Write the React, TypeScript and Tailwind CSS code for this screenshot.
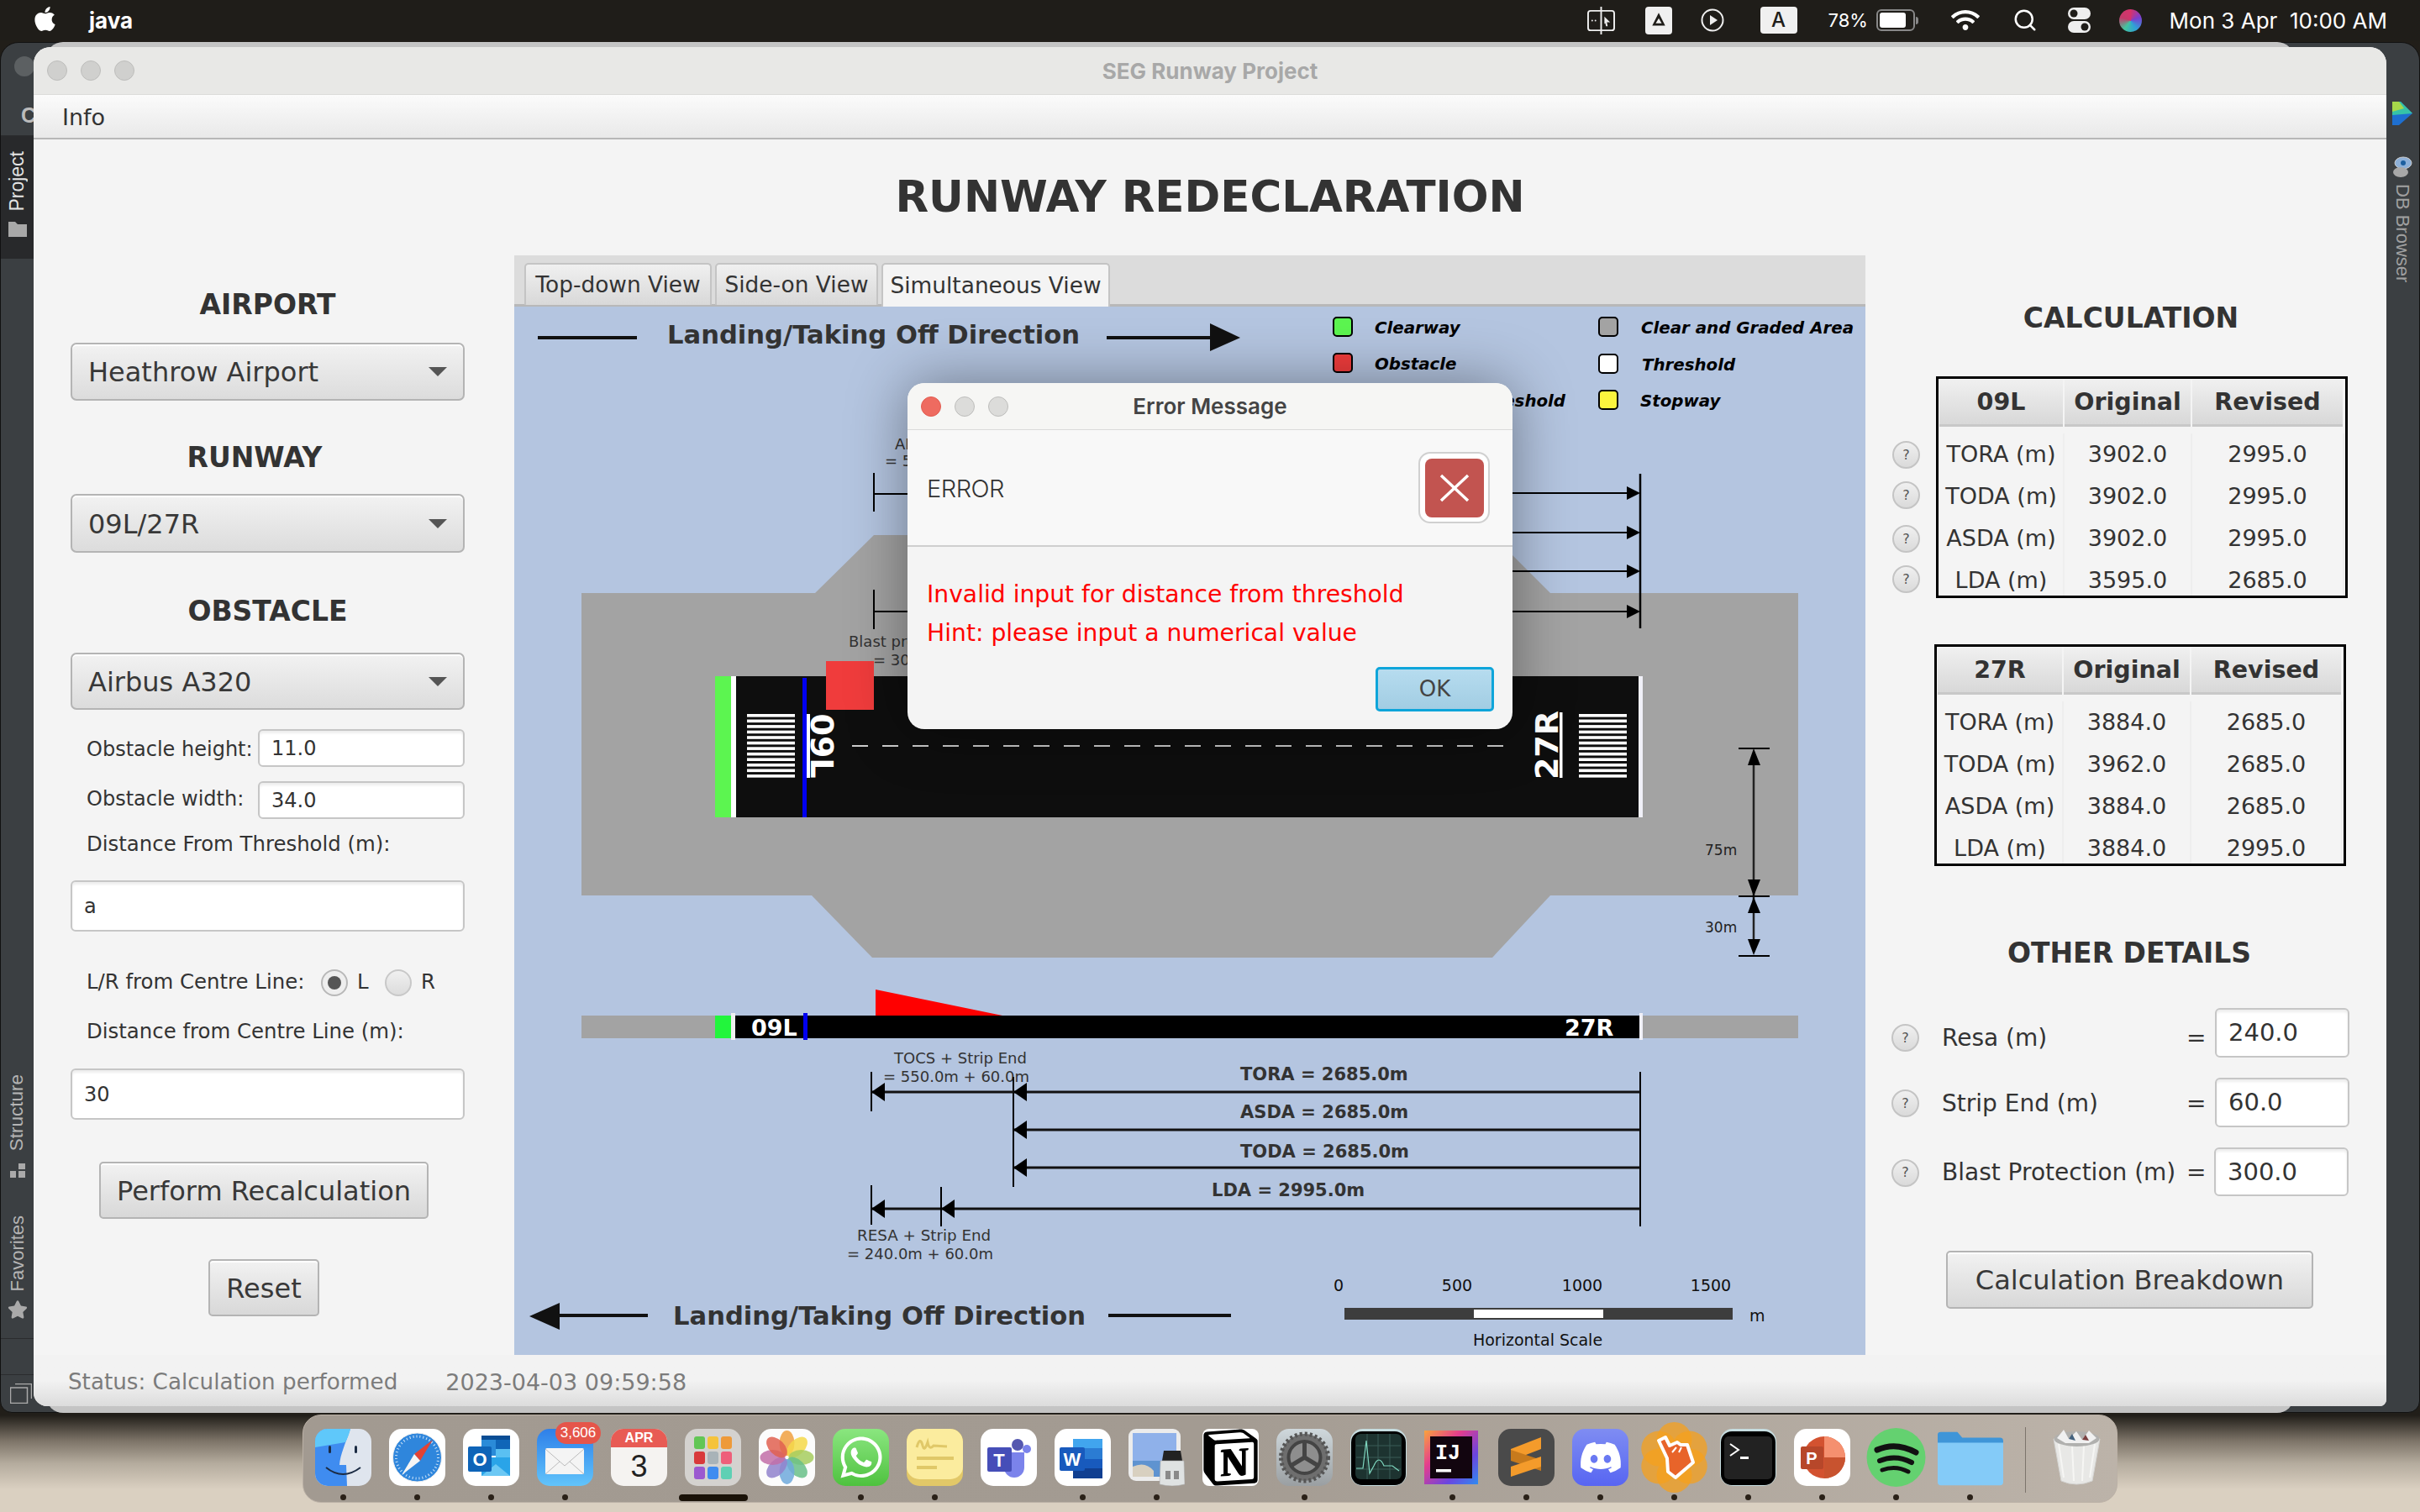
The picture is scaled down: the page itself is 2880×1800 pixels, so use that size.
import React from 'react';
import { FaApple, FaWhatsapp, FaDiscord, FaWifi, FaStar } from 'react-icons/fa';
import { SiNotion } from 'react-icons/si';
import { Search } from 'lucide-react';

const Light = ({ c }: { c: string }) => (
  <span className={`block w-[24px] h-[24px] rounded-full border border-[#bdbdbb] ${c}`} />
);

function Combo({ label }: { label: string }) {
  return (
    <div className="h-full flex items-center justify-between pl-[19px] pr-[19px] border-2 border-[#b4b4b4] rounded-[7px] bg-gradient-to-b from-[#f2f2f2] to-[#dcdcdc] shadow-[inset_0_2px_0_#fff] text-[32px] text-[#383838]">
      <span className="pt-[1px]">{label}</span>
      <span className="w-0 h-0 border-l-[11px] border-r-[11px] border-t-[11px] border-l-transparent border-r-transparent border-t-[#555]" />
    </div>
  );
}

function Input({ value, size = 'text-[24px]', cls = '' }: { value: string; size?: string; cls?: string }) {
  return (
    <div className={`flex items-center pl-[14px] pt-[1px] border-2 border-[#c6c6c6] rounded-[6px] bg-white shadow-[inset_0_3px_3px_#eee] text-[#333] ${size} ${cls}`}>
      {value}
    </div>
  );
}

function Btn({ label, cls }: { label: string; cls: string }) {
  return (
    <div className={`flex items-center justify-center pt-[1px] border-2 border-[#b4b4b4] rounded-[5px] bg-gradient-to-b from-[#f2f2f2] to-[#d8d8d8] shadow-[inset_0_2px_0_#fff] text-[#383838] text-[32px] ${cls}`}>
      {label}
    </div>
  );
}

function Help({ cls = '' }: { cls?: string }) {
  return (
    <div className={`shrink-0 w-[33px] h-[33px] rounded-full border-2 border-[#c4c4c4] bg-gradient-to-b from-[#f0f0f0] to-[#dadada] flex items-center justify-center text-[16px] text-[#555] ${cls}`}>
      ?
    </div>
  );
}

function DataTable({ head, rows, cols, cls }: { head: string; rows: string[][]; cols: string; cls: string }) {
  return (
    <div className={`w-[490px] h-[264px] border-[3px] border-black overflow-hidden ${cls}`}>
      <div className={`grid ${cols} h-[56px] mt-[1px] pl-[1px]`}>
        {[head, 'Original', 'Revised'].map((h) => (
          <div key={h} className="flex items-center justify-center pt-[2px] mr-[2px] bg-gradient-to-b from-[#f0f0f0] to-[#d8d8d8] border-b-[3px] border-[#c8c8c8] text-[28.5px] font-bold text-[#333]">
            {h}
          </div>
        ))}
      </div>
      <div className="pt-[8px]">
        {rows.map((r) => (
          <div key={r[0]} className={`grid ${cols} h-[50px] pl-[1px]`}>
            {r.map((c, i) => (
              <div key={i} className="flex items-center justify-center text-[27px] text-[#333] border-r-2 border-[#eeeeee] whitespace-nowrap">
                {c}
              </div>
            ))}
          </div>
        ))}
      </div>
    </div>
  );
}

function DetailRow({ label, value, cls, shift, inputCls = 'ml-[13px]' }: { label: string; value: string; cls: string; shift: string; inputCls?: string }) {
  return (
    <div className={`flex items-center pl-[31px] ${cls}`}>
      <div className={`flex items-center ${shift}`}>
        <Help />
        <span className="ml-[27px] w-[291px] text-[28px] text-[#333]">{label}</span>
        <span className="w-[21px] text-[28px] text-[#333]">=</span>
      </div>
      <Input value={value} size="text-[29px]" cls={`w-[160px] h-full ${inputCls}`} />
    </div>
  );
}

const T = ({ x, y, s, w, a, f = '#333', st, children }: { x: number; y: number; s: number; w?: number; a?: 'middle' | 'start' | 'end'; f?: string; st?: 'italic'; children: React.ReactNode }) => (
  <text x={x} y={y} fontSize={s} fontWeight={w || 400} textAnchor={a || 'start'} fill={f} fontStyle={st}>{children}</text>
);

const LeftHead = ({ x, y }: { x: number; y: number }) => <polygon points={`${x},${y} ${x + 16},${y - 11} ${x + 16},${y + 11}`} fill="#000" />;
const RightHead = ({ x, y }: { x: number; y: number }) => <polygon points={`${x},${y} ${x - 16},${y - 8} ${x - 16},${y + 8}`} fill="#000" />;

function Stripes({ x }: { x: number }) {
  const ys = Array.from({ length: 12 }, (_, i) => 850 + i * 6.55);
  return <>{ys.map((y) => <rect key={y} x={x} y={y} width="57" height="3.6" fill="#fff" />)}</>;
}

const legend: [number, number, string, string, number, 'start' | 'end'][] = [
  [1587, 378, '#5cf550', 'Clearway', 1636, 'start'],
  [1587, 421, '#f03c3c', 'Obstacle', 1636, 'start'],
  [1587, 465, '#2020f0', 'Displaced Threshold', 1863, 'end'],
  [1903, 378, '#a3a3a3', 'Clear and Graded Area', 1953, 'start'],
  [1903, 422, '#ffffff', 'Threshold', 1954, 'start'],
  [1903, 465, '#fbf43e', 'Stopway', 1952, 'start'],
];

function Diagram() {
  const dashes = Array.from({ length: 22 }, (_, i) => 1014 + i * 36);
  return (
    <svg viewBox="612 365 1608 1248" className="block w-[1608px] h-[1248px] bg-[#b4c5e0]">
      <line x1="640" x2="758" y1="402" y2="402" stroke="#111" strokeWidth="4" />
      <T x={794} y={409} s={30.6} w={700}>Landing/Taking Off Direction</T>
      <line x1="1317" x2="1442" y1="402" y2="402" stroke="#111" strokeWidth="4" />
      <polygon points="1440,385 1476,402 1440,418" fill="#111" />

      {legend.map(([x, y, c, t, tx, a]) => (
        <g key={t}>
          <rect x={x} y={y} width="22" height="22" rx="4" fill={c} stroke="#000" strokeWidth="2" />
          <T x={tx} y={y + 19} s={19.8} w={700} st="italic" f="#000" a={a}>{t}</T>
        </g>
      ))}

      <polygon points="692,706 970,706 1040,637 1776,637 1845,706 2140,706 2140,1066 1845,1066 1776,1140 1038,1140 966,1066 692,1066" fill="#a3a3a3" />

      <line x1="1040" x2="1040" y1="563" y2="609" stroke="#000" strokeWidth="2" />
      <line x1="1040" x2="1100" y1="588" y2="588" stroke="#000" strokeWidth="2" />
      <line x1="1040" x2="1040" y1="702" y2="749" stroke="#000" strokeWidth="2" />
      <line x1="1040" x2="1100" y1="728" y2="728" stroke="#000" strokeWidth="2" />
      <T x={1065} y={535} s={18}>ALS + Strip End</T>
      <T x={1053} y={555} s={18}>= 550.0m + 60.0m</T>
      <T x={1010} y={770} s={18}>Blast protection</T>
      <T x={1039} y={792} s={18}>= 300.0m</T>
      <line x1="1952" x2="1952" y1="564" y2="748" stroke="#000" strokeWidth="2.5" />
      {[587, 634, 680, 728].map((y) => (
        <g key={y}>
          <line x1="1700" x2="1940" y1={y} y2={y} stroke="#000" strokeWidth="2" />
          <RightHead x={1952} y={y} />
        </g>
      ))}

      <rect x="851" y="805" width="19" height="168" fill="#5cf550" />
      <rect x="875" y="805" width="1075" height="168" fill="#0e0e0e" />
      <rect x="870" y="805" width="6" height="168" fill="#fff" />
      <rect x="1950" y="805" width="5" height="168" fill="#f0f0f8" />
      <rect x="955" y="807" width="5" height="166" fill="#0000f0" />
      <Stripes x={889} />
      <Stripes x={1879} />
      <rect x="960" y="850" width="4" height="76" fill="#fff" />
      <text x="965" y="888" fontSize="38" fontWeight="700" fill="#fff" textAnchor="middle" transform="rotate(90 965 888)">09L</text>
      <rect x="1856" y="848" width="3.5" height="78" fill="#fff" />
      <text x="1854" y="887" fontSize="38" fontWeight="700" fill="#fff" textAnchor="middle" transform="rotate(-90 1854 887)">27R</text>
      {dashes.map((x) => <rect key={x} x={x} y="887" width="19" height="2" fill="#ccc" />)}
      <rect x="983" y="787" width="57" height="58" fill="#f03c3c" />

      <line x1="2087" x2="2087" y1="900" y2="1130" stroke="#222" strokeWidth="2.5" />
      {[891, 1067, 1138].map((y) => <line key={y} x1="2069" x2="2106" y1={y} y2={y} stroke="#000" strokeWidth="2" />)}
      <polygon points="2087,891 2095,911 2080,911" fill="#000" />
      <polygon points="2087,1067 2095,1047 2080,1047" fill="#000" />
      <polygon points="2087,1068 2095,1087 2080,1087" fill="#000" />
      <polygon points="2087,1137 2095,1118 2080,1118" fill="#000" />
      <T x={2029} y={1018} s={17} f="#222">75m</T>
      <T x={2029} y={1110} s={17} f="#222">30m</T>

      <rect x="692" y="1209" width="1448" height="27" fill="#a3a3a3" />
      <rect x="851" y="1209" width="19" height="27" fill="#22f53c" />
      <rect x="875" y="1209" width="1076" height="27" fill="#000" />
      <rect x="870" y="1206" width="5" height="32" fill="#f0f0f0" />
      <rect x="1951" y="1206" width="4" height="32" fill="#f0f0f8" />
      <rect x="956" y="1206" width="5" height="32" fill="#0000f0" />
      <T x={894} y={1233} s={27} w={700} f="#fff">09L</T>
      <T x={1862} y={1233} s={27} w={700} f="#fff">27R</T>
      <polygon points="1042,1178 1193,1209 1042,1209" fill="#f00" />

      <T x={1143} y={1266} s={18} a="middle">TOCS + Strip End</T>
      <T x={1051} y={1288} s={18}>= 550.0m + 60.0m</T>
      <line x1="1037" x2="1037" y1="1276" y2="1323" stroke="#000" strokeWidth="2" />
      <line x1="1206" x2="1206" y1="1282" y2="1413" stroke="#000" strokeWidth="2" />
      <line x1="1952" x2="1952" y1="1276" y2="1460" stroke="#000" strokeWidth="2" />
      <line x1="1037" x2="1952" y1="1300" y2="1300" stroke="#111" strokeWidth="3" />
      <line x1="1206" x2="1952" y1="1345" y2="1345" stroke="#111" strokeWidth="3" />
      <line x1="1206" x2="1952" y1="1390" y2="1390" stroke="#111" strokeWidth="3" />
      <line x1="1037" x2="1952" y1="1439" y2="1439" stroke="#111" strokeWidth="3" />
      <LeftHead x={1037} y={1300} />
      <LeftHead x={1206} y={1300} />
      <LeftHead x={1206} y={1345} />
      <LeftHead x={1206} y={1390} />
      <LeftHead x={1037} y={1439} />
      <LeftHead x={1120} y={1439} />
      <line x1="1037" x2="1037" y1="1411" y2="1458" stroke="#000" strokeWidth="2" />
      <line x1="1120" x2="1120" y1="1413" y2="1460" stroke="#000" strokeWidth="2" />
      <T x={1476} y={1286} s={21} w={700}>TORA = 2685.0m</T>
      <T x={1476} y={1331} s={21} w={700}>ASDA = 2685.0m</T>
      <T x={1476} y={1378} s={21} w={700}>TODA = 2685.0m</T>
      <T x={1442} y={1424} s={21} w={700}>LDA = 2995.0m</T>
      <T x={1020} y={1477} s={18.3}>RESA + Strip End</T>
      <T x={1008} y={1499} s={18}>= 240.0m + 60.0m</T>

      <polygon points="630,1567 666,1551 666,1583" fill="#111" />
      <line x1="660" x2="771" y1="1566" y2="1566" stroke="#111" strokeWidth="4" />
      <T x={801} y={1577} s={30.6} w={700}>Landing/Taking Off Direction</T>
      <line x1="1319" x2="1465" y1="1566" y2="1566" stroke="#111" strokeWidth="4" />

      <T x={1593} y={1537} s={19} a="middle" f="#111">0</T>
      <T x={1734} y={1537} s={19} a="middle" f="#111">500</T>
      <T x={1883} y={1537} s={19} a="middle" f="#111">1000</T>
      <T x={2036} y={1537} s={19} a="middle" f="#111">1500</T>
      <rect x="1600" y="1557" width="462" height="14" fill="#3d3d3d" />
      <rect x="1754" y="1559" width="154" height="10" fill="#fff" />
      <T x={2082} y={1573} s={19} f="#111">m</T>
      <T x={1830} y={1602} s={19} a="middle" f="#111">Horizontal Scale</T>
    </svg>
  );
}

const MenuBar = () => (
  <div className="relative h-[48px] bg-[#1f1d19] flex items-center text-white font-['Inter',sans-serif]">
    <FaApple className="ml-[37px] w-[33px] h-[33px] -mt-[3px]" />
    <span className="ml-[36px] text-[26px] font-bold">java</span>
    <div className="ml-auto flex items-center">
      <svg viewBox="0 0 34 34" className="w-[33px] h-[33px]">
        <rect x="1" y="5" width="32" height="24" rx="3" fill="none" stroke="#eee" strokeWidth="2" />
        <line x1="17" x2="17" y1="0" y2="34" stroke="#eee" strokeWidth="2" />
        <polygon points="21,12 28,19 24,19 25,24 23,24 22,20 21,21" fill="#eee" />
        <circle cx="6" cy="17" r="1" fill="#eee" /><circle cx="10" cy="17" r="1" fill="#eee" />
      </svg>
      <div className="ml-[36px] w-[32px] h-[33px] rounded-[4px] bg-[#f0f0f0] flex items-center justify-center">
        <svg viewBox="0 0 20 20" className="w-[22px] h-[22px]"><path d="M10 2 L17 16 H3 Z M10 8 L6.8 13.5 H13.2 Z" fill="#1f1d19" fillRule="evenodd" /></svg>
      </div>
      <svg viewBox="0 0 28 28" className="ml-[34px] w-[28px] h-[28px]">
        <circle cx="14" cy="14" r="12.5" fill="none" stroke="#eee" strokeWidth="2" />
        <polygon points="11,8 20,14 11,20" fill="#eee" />
      </svg>
      <div className="ml-[43px] w-[44px] h-[32px] rounded-[4px] bg-[#f0f0f0] text-[#1f1d19] text-[24px] font-medium flex items-center justify-center">A</div>
      <span className="ml-[37px] text-[22px] w-[46px]">78%</span>
      <div className="ml-[11px] flex items-center">
        <div className="w-[46px] h-[26px] rounded-[6px] border-2 border-[#888] p-[2px]">
          <div className="w-[31px] h-full rounded-[3px] bg-white" />
        </div>
        <div className="w-[3px] h-[9px] bg-[#888] rounded-r ml-[1px]" />
      </div>
      <FaWifi className="ml-[39px] w-[34px] h-[28px]" />
      <Search className="ml-[39px] w-[30px] h-[30px]" strokeWidth={2} />
      <svg viewBox="0 0 29 32" className="ml-[35px] w-[29px] h-[32px]">
        <rect x="1" y="1" width="27" height="14" rx="7" fill="#eee" />
        <rect x="1" y="17" width="27" height="14" rx="7" fill="#eee" />
        <circle cx="8" cy="8" r="4.5" fill="#1f1d19" /><circle cx="21" cy="24" r="4.5" fill="#1f1d19" />
      </svg>
      <div className="ml-[33px] w-[27px] h-[27px] rounded-full bg-[conic-gradient(#d6336c,#7a3fd0,#2f9fd8,#43c59e,#c43a6a,#d6336c)]" />
      <span className="ml-[33px] mr-[39px] text-[26px] whitespace-nowrap">Mon 3 Apr&nbsp;&nbsp;10:00 AM</span>
    </div>
  </div>
);

const Ide = () => (
  <div className="absolute left-0 top-[50px] w-[2880px] h-[1632px] rounded-t-[22px] rounded-b-[14px] bg-[#3b3f42] border border-[#111] overflow-hidden flex justify-between font-['Liberation_Sans',sans-serif]">
    <div className="w-[39px] flex flex-col">
      <div className="relative h-[111px] border-b border-[#2a2c2e] overflow-hidden">
        <span className="absolute left-[16px] top-[16px] w-[24px] h-[24px] rounded-full bg-[#5c6062]" />
        <span className="absolute left-[24px] top-[68px] w-[15px] overflow-hidden text-[25px] font-bold text-[#bbb]">C</span>
      </div>
      <div className="h-[146px] bg-[#28292b] flex flex-col items-center pt-[18px] text-[#e4e4e4]">
        <span className="text-[23px] [writing-mode:vertical-rl] rotate-180 leading-none">Project</span>
        <svg viewBox="0 0 22 18" className="mt-[12px] w-[22px] h-[18px]"><path d="M0 0 H8 L11 3 H22 V18 H0 Z" fill="#a8a8a8" /></svg>
      </div>
      <div className="mt-[971px] flex flex-col items-center text-[#b4b4b4]">
        <span className="text-[22.5px] [writing-mode:vertical-rl] rotate-180 leading-none">Structure</span>
        <svg viewBox="0 0 18 17" className="mt-[15px] w-[18px] h-[17px]"><path d="M0 9 H7 V17 H0 Z M10 0 H18 V7 H10 Z M10 9 H18 V17 H10 Z" fill="#aaa" /></svg>
        <span className="mt-[45px] text-[22px] [writing-mode:vertical-rl] rotate-180 leading-none">Favorites</span>
        <FaStar className="mt-[9px] w-[24px] h-[24px] text-[#aaa]" />
      </div>
      <div className="mt-[22px] h-px bg-[#2a2c2e]" />
      <div className="mt-[42px] h-px bg-[#2a2c2e]" />
      <svg viewBox="0 0 26 24" className="ml-[11px] mt-[10px] w-[26px] h-[24px]">
        <path d="M6 0.5 H25.5 V18 M0.5 5 H20.5 V23.5 H0.5 Z" fill="none" stroke="#aaa" strokeWidth="1.5" />
      </svg>
    </div>
    <div className="w-[40px] flex flex-col items-center pt-[70px] relative text-[#a0a0a0]">
      <svg viewBox="0 0 24 28" className="w-[24px] h-[28px]">
        <path d="M0 0 L10 0 L24 14 L8 28 L0 28 Z" fill="#1e6fd0" />
        <path d="M0 0 L10 0 L24 14 L0 16 Z" fill="#36c3a8" />
        <path d="M0 0 L8 0 L14 8 L0 12 Z" fill="#a6d84a" />
      </svg>
      <svg viewBox="0 0 24 26" className="mt-[37px] w-[24px] h-[26px]">
        <ellipse cx="13" cy="8" rx="10" ry="7" fill="#8db0d8" stroke="#ccc" /><circle cx="13" cy="8" r="3" fill="#1c5f9f" />
        <ellipse cx="10" cy="19" rx="9" ry="6" fill="#a8a8a8" />
      </svg>
      <span className="mt-[7px] text-[22px] [writing-mode:vertical-rl] leading-none whitespace-nowrap">DB Browser</span>
    </div>
  </div>
);

const App1 = () => (
  <div className="absolute left-[40px] top-[56px] w-[2800px] h-[1618px] rounded-t-[20px] rounded-bl-[16px] rounded-br-[8px] overflow-hidden bg-[#f4f4f4] flex flex-col font-['DejaVu_Sans',sans-serif] text-[#333]">
    <div className="relative h-[57px] bg-[#e8e8e6] border-b border-[#dcdcda] flex items-center pl-[16px] gap-[16px]">
      <Light c="bg-[#d0d0ce]" />
      <Light c="bg-[#d0d0ce]" />
      <Light c="bg-[#d0d0ce]" />
      <span className="absolute left-0 right-0 text-center text-[26px] font-['Inter',sans-serif] font-bold text-[#a8a8a8]">SEG Runway Project</span>
    </div>
    <div className="h-[53px] bg-gradient-to-b from-[#fbfbfb] to-[#e9e9e9] border-b-2 border-[#b7b7b7] flex items-center pl-[34px] pt-[4px] text-[27px] text-[#333]">
      Info
    </div>
    <div className="h-[138px] flex items-center justify-center text-[51.5px] font-bold text-[#333] pt-[0px]">RUNWAY REDECLARATION</div>
    <div className="flex h-[1309px]">
      <div className="w-[572px] pl-[44px] pr-[59px] flex flex-col">
        <div className="mt-[39px] h-[40px] flex items-center justify-center text-[33px] font-bold">AIRPORT</div>
        <div className="mt-[25px] h-[69px]"><Combo label="Heathrow Airport" /></div>
        <div className="mt-[47px] h-[40px] flex items-center justify-center pr-[31px] text-[33px] font-bold pt-[1px]">RUNWAY</div>
        <div className="mt-[24px] h-[70px]"><Combo label="09L/27R" /></div>
        <div className="mt-[49px] h-[40px] flex items-center justify-center text-[33px] font-bold pt-[1px]">OBSTACLE</div>
        <div className="mt-[30px] h-[68px]"><Combo label="Airbus A320" /></div>
        <div className="mt-[23px] h-[45px] flex items-center pl-[19px] text-[24px]">
          <span className="w-[204px] pt-[2px]">Obstacle height:</span>
          <Input value="11.0" cls="w-[246px] h-full" />
        </div>
        <div className="mt-[17px] h-[45px] flex items-center pl-[19px] text-[24px]">
          <span className="w-[204px] -mt-[4px]">Obstacle width:</span>
          <Input value="34.0" cls="w-[246px] h-full" />
        </div>
        <div className="mt-[14px] h-[30px] flex items-center pl-[19px] pt-[2px] text-[24.4px] whitespace-nowrap">Distance From Threshold (m):</div>
        <div className="mt-[29px] h-[61px]"><Input value="a" cls="h-full" /></div>
        <div className="mt-[44px] h-[33px] flex items-center pl-[19px] text-[24.4px]">
          <span className="w-[279px]">L/R from Centre Line:</span>
          <span className="w-[32px] h-[32px] rounded-full border-2 border-[#b8b8b8] bg-[#eee] flex items-center justify-center">
            <span className="w-[16px] h-[16px] rounded-full bg-[#555]" />
          </span>
          <span className="ml-[11px] w-[33px]">L</span>
          <span className="w-[32px] h-[32px] rounded-full border-2 border-[#c8c8c8] bg-gradient-to-b from-[#f0f0f0] to-[#dcdcdc]" />
          <span className="ml-[11px]">R</span>
        </div>
        <div className="mt-[26px] h-[30px] flex items-center pl-[19px] pt-[2px] text-[24.4px] whitespace-nowrap">Distance from Centre Line (m):</div>
        <div className="mt-[30px] h-[61px]"><Input value="30" cls="h-full" /></div>
        <Btn label="Perform Recalculation" cls="mt-[50px] h-[68px] ml-[34px] w-[392px]" />
        <Btn label="Reset" cls="mt-[48px] h-[68px] ml-[164px] w-[132px]" />
      </div>
      <div className="w-[1608px] flex flex-col">
        <div className="h-[61px] bg-[#dcdcdc] border-b-[3px] border-[#b8b8b8] flex pl-[12px] pt-[9px] gap-[4px] text-[26.4px] text-[#333]">
          <div className="h-[50px] w-[223px] flex items-center justify-center rounded-t-[5px] border-2 border-b-0 border-[#c4c4c4] bg-gradient-to-b from-[#f0f0f0] to-[#d8d8d8]">Top-down View</div>
          <div className="h-[50px] w-[194px] flex items-center justify-center rounded-t-[5px] border-2 border-b-0 border-[#c4c4c4] bg-gradient-to-b from-[#f0f0f0] to-[#d8d8d8]">Side-on View</div>
          <div className="h-[52px] w-[272px] flex items-center justify-center rounded-t-[5px] border-2 border-b-0 border-[#c4c4c4] bg-[#f4f4f4]">Simultaneous View</div>
        </div>
        <Diagram />
      </div>
      <div className="flex-1 flex flex-col">
        <div className="mt-[54px] h-[40px] flex items-center justify-center pl-[26px] pr-[14px] pt-[2px] text-[33px] font-bold">CALCULATION</div>
        <div className="mt-[50px] flex pl-[32px]">
          <div className="w-[33px] pt-[77px]">
            <Help />
            <Help cls="mt-[15px]" />
            <Help cls="mt-[19px]" />
            <Help cls="mt-[15px]" />
          </div>
          <DataTable
            head="09L"
            cols="grid-cols-[149px_152px_181px]"
            cls="ml-[19px]"
            rows={[
              ['TORA (m)', '3902.0', '2995.0'],
              ['TODA (m)', '3902.0', '2995.0'],
              ['ASDA (m)', '3902.0', '2995.0'],
              ['LDA (m)', '3595.0', '2685.0'],
            ]}
          />
        </div>
        <DataTable
          head="27R"
          cols="grid-cols-[150px_152px_180px]"
          cls="mt-[55px] ml-[82px]"
          rows={[
            ['TORA (m)', '3884.0', '2685.0'],
            ['TODA (m)', '3962.0', '2685.0'],
            ['ASDA (m)', '3884.0', '2685.0'],
            ['LDA (m)', '3884.0', '2995.0'],
          ]}
        />
        <div className="mt-[83px] h-[40px] flex items-center justify-center pl-[28px] pr-[20px] pt-[1px] text-[33px] font-bold">OTHER DETAILS</div>
        <DetailRow label="Resa (m)" value="240.0" cls="mt-[46px] h-[59px]" shift="pt-[12px]" />
        <DetailRow label="Strip End (m)" value="60.0" cls="mt-[24px] h-[59px]" shift="pt-[2px]" />
        <DetailRow label="Blast Protection (m)" value="300.0" cls="mt-[24px] h-[58px]" shift="pt-[2px]" inputCls="ml-[12px]" />
        <Btn label="Calculation Breakdown" cls="mt-[65px] h-[69px] ml-[96px] w-[437px]" />
      </div>
    </div>
    <div className="flex-1 flex items-center pl-[41px] pt-[5px] gap-[57px] bg-gradient-to-b from-[#f2f2f2] from-50% to-[#dcdcdc] text-[#7c7c7c]">
      <span className="text-[26.2px]">Status: Calculation performed</span>
      <span className="text-[27px]">2023-04-03 09:59:58</span>
    </div>
  </div>
);

const ErrorDialog = () => (
  <div className="absolute left-[1080px] top-[456px] w-[720px] h-[412px] rounded-[20px] overflow-hidden bg-[#f4f4f4] shadow-[0_0_70px_rgba(0,0,0,0.4)] flex flex-col font-['DejaVu_Sans',sans-serif]">
    <div className="relative h-[56px] bg-[#f6f6f4] border-b border-[#dadada] flex items-center pl-[16px] gap-[16px]">
      <Light c="bg-[#ee6b60] border-[#e25c50]" />
      <Light c="bg-[#dcdcda]" />
      <Light c="bg-[#dcdcda]" />
      <span className="absolute left-0 right-0 text-center text-[26px] font-['Inter',sans-serif] font-semibold text-[#444]">Error Message</span>
    </div>
    <div className="h-[139px] bg-[#f8f8f8] border-b-2 border-[#cfcfcf] flex items-center justify-between pl-[23px] pr-[27px]">
      <span className="text-[29px] pt-[2px] font-['Inter',sans-serif] font-light text-[#333] tracking-[-0.5px]">ERROR</span>
      <div className="w-[85px] h-[85px] rounded-[14px] border-2 border-[#d0d0d0] bg-white flex items-center justify-center">
        <div className="w-[70px] h-[70px] rounded-[8px] bg-[#c25450] flex items-center justify-center">
          <svg viewBox="0 0 36 36" className="w-[36px] h-[36px]"><path d="M2 3 L34 33 M34 3 L2 33" stroke="#fff" strokeWidth="3.5" /></svg>
        </div>
      </div>
    </div>
    <div className="flex-1 pl-[23px] pr-[22px] text-[28.2px] text-[#f00]">
      <div className="mt-[37px] h-[40px] flex items-center">Invalid input for distance from threshold</div>
      <div className="mt-[6px] h-[40px] flex items-center">Hint: please input a numerical value</div>
      <div className="mt-[20px] ml-auto w-[141px] h-[53px] rounded-[5px] border-[3px] border-[#0ea5da] bg-gradient-to-b from-[#b6dcef] to-[#a2cde3] flex items-center justify-center text-[26px] text-[#444]">OK</div>
    </div>
  </div>
);

const Tile = ({ c, children }: { c: string; children?: React.ReactNode }) => (
  <div className={`w-[67px] h-[68px] rounded-[15px] overflow-hidden flex items-center justify-center ${c}`}>{children}</div>
);

const V = 'w-[67px] h-[68px] block';

const icons: { el: React.ReactNode; dot?: boolean }[] = [
  { dot: true, el: (
    <svg viewBox="0 0 67 68" className={V}>
      <defs><clipPath id="fc"><rect width="67" height="68" rx="15" /></clipPath></defs>
      <g clipPath="url(#fc)">
        <rect width="67" height="68" fill="#dfe5ee" />
        <path d="M0 0 H42 C36 18 30 30 29 43 H37 L38 68 H0 Z" fill="#3f8cf0" />
        <path d="M0 0 H42 C40 8 38 12 36 16 L0 22Z" fill="#5fc8fa" />
      </g>
      <rect x="16" y="20" width="3" height="9" fill="#1c2c44" rx="1.5" />
      <rect x="47" y="20" width="3" height="9" fill="#1c2c44" rx="1.5" />
      <path d="M13 46 Q33 62 54 46" fill="none" stroke="#1c2c44" strokeWidth="2" />
    </svg>) },
  { dot: true, el: (
    <Tile c="bg-white">
      <svg viewBox="0 0 67 68" className={V}>
        <circle cx="33.5" cy="34" r="29" fill="#2f86dc" stroke="#eee" strokeWidth="1" />
        <circle cx="33.5" cy="34" r="25" fill="none" stroke="#cfe4f8" strokeWidth="3" strokeDasharray="1 3" />
        <polygon points="52,13 30,30 37,38" fill="#e34234" />
        <polygon points="15,55 30,30 37,38" fill="#f5f5f5" />
      </svg>
    </Tile>) },
  { dot: true, el: (
    <Tile c="bg-white">
      <svg viewBox="0 0 67 68" className={V}>
        <rect x="22" y="8" width="34" height="24" fill="#1066b8" />
        <rect x="22" y="8" width="34" height="5" fill="#0a4d94" />
        <rect x="22" y="13" width="17" height="19" fill="#2a8bd8" />
        <rect x="39" y="24" width="17" height="16" fill="#5ac0f2" />
        <polygon points="22,34 56,34 56,56 22,56" fill="#2aa4e8" />
        <polygon points="22,56 39,42 56,56" fill="#6cc8f4" />
        <rect x="6" y="21" width="28" height="30" rx="2" fill="#0e64b8" />
        <text x="20" y="44" fontSize="22" fontWeight="700" fill="#fff" textAnchor="middle" fontFamily="Liberation Sans">O</text>
      </svg>
    </Tile>) },
  { dot: true, el: (
    <Tile c="bg-gradient-to-b from-[#2f7fe8] to-[#62c4fb]">
      <svg viewBox="0 0 67 68" className={V}>
        <rect x="10" y="23" width="46" height="31" rx="2" fill="#f4f4f4" />
        <path d="M10 24 L33 44 L56 24 M10 54 L27 39 M56 54 L39 39" fill="none" stroke="#bbb" strokeWidth="1" />
      </svg>
    </Tile>) },
  { el: (
    <div className="w-[67px] h-[68px] rounded-[15px] overflow-hidden bg-[#f5f3f1] flex flex-col items-center font-['Liberation_Sans',sans-serif]">
      <div className="w-full h-[22px] bg-[#e85b54] text-white text-[16px] font-bold flex items-center justify-center">APR</div>
      <div className="text-[36px] text-[#222] leading-[46px] font-light">3</div>
    </div>) },
  { el: (
    <Tile c="bg-[#d4d2cf]">
      <div className="grid grid-cols-3 gap-[3px]">
        {['#62c655', '#f5c33b', '#ee9a3a', '#d8393a', '#a9b3b8', '#ee5f7a', '#9b59d0', '#3f8cf0', '#5fd0b4'].map((c) => (
          <span key={c} className="w-[13px] h-[15px] rounded-[3px]" style={{ background: c }} />
        ))}
      </div>
    </Tile>) },
  { el: (
    <Tile c="bg-[#fcfcfc]">
      <svg viewBox="0 0 67 68" className={V}>
        {[['#f0a040', 0], ['#f5d84a', 45], ['#a6cc5e', 90], ['#68bf88', 135], ['#6fa9dc', 180], ['#9082cc', 225], ['#c26ea8', 270], ['#e06050', 315]].map(([c, r]) => (
          <ellipse key={c as string} cx="33.5" cy="17" rx="9" ry="15" fill={c as string} opacity="0.85" transform={`rotate(${r} 33.5 34)`} />
        ))}
      </svg>
    </Tile>) },
  { dot: true, el: (
    <Tile c="bg-gradient-to-b from-[#8ae67f] to-[#4ec23e]"><FaWhatsapp className="w-[56px] h-[56px] text-white" /></Tile>) },
  { dot: true, el: (
    <Tile c="bg-[#e2c868]">
      <svg viewBox="0 0 67 68" className={V}>
        <rect x="0" y="0" width="67" height="60" rx="15" fill="#fbec9e" />
        <path d="M12 22 Q16 8 19 20 Q21 28 25 16 Q27 26 32 20 L48 21" fill="none" stroke="#e0c868" strokeWidth="3" />
        <rect x="12" y="33" width="44" height="4" fill="#e0c868" />
        <rect x="12" y="44" width="24" height="4" fill="#e0c868" />
      </svg>
    </Tile>) },
  { el: (
    <Tile c="bg-white">
      <svg viewBox="0 0 67 68" className={V}>
        <circle cx="44" cy="19" r="7" fill="#5558af" />
        <circle cx="55" cy="24" r="5" fill="#7b83eb" />
        <path d="M28 28 H52 V46 A12 12 0 0 1 28 46 Z" fill="#7b83eb" />
        <rect x="8" y="22" width="29" height="29" rx="2" fill="#464eb8" />
        <text x="22" y="45" fontSize="22" fontWeight="700" fill="#fff" textAnchor="middle" fontFamily="Liberation Sans">T</text>
      </svg>
    </Tile>) },
  { dot: true, el: (
    <Tile c="bg-white">
      <svg viewBox="0 0 67 68" className={V}>
        <rect x="22" y="12" width="35" height="47" rx="2" fill="#2b7cd3" />
        <rect x="22" y="12" width="35" height="11" fill="#41a5ee" />
        <rect x="22" y="36" width="35" height="11" fill="#185abd" />
        <rect x="22" y="47" width="35" height="12" fill="#103f91" />
        <rect x="6" y="22" width="30" height="28" rx="2" fill="#185abd" />
        <text x="21" y="44" fontSize="22" fontWeight="700" fill="#fff" textAnchor="middle" fontFamily="Liberation Sans">W</text>
      </svg>
    </Tile>) },
  { dot: true, el: (
    <svg viewBox="0 0 67 68" className={V}>
      <rect width="62" height="62" rx="9" fill="#ececec" />
      <rect x="5" y="5" width="52" height="52" fill="#8fb1ea" />
      <rect x="5" y="38" width="52" height="19" fill="#5f93d0" />
      <path d="M5 45 Q20 38 30 50 L30 57 H5Z" fill="#d8d0c0" />
      <path d="M42 26 H62 L64 38 H40 Z" fill="#222" />
      <path d="M38 38 H66 L67 66 Q52 70 37 66 Z" fill="#dfe2e2" stroke="#aaa" strokeWidth="0.6" />
      <rect x="44" y="50" width="6" height="10" fill="#8a8a8a" />
      <rect x="54" y="50" width="6" height="10" fill="#8a8a8a" />
    </svg>) },
  { el: (
    <div className="w-[67px] h-[68px] bg-white rounded-[8px] flex items-center justify-center"><SiNotion className="w-[72px] h-[72px] text-black" /></div>) },
  { dot: true, el: (
    <Tile c="bg-gradient-to-b from-[#cfd8dc] to-[#9a9fa2]">
      <svg viewBox="0 0 67 68" className={V}>
        <circle cx="33.5" cy="34" r="28" fill="#6e6e6e" />
        <circle cx="33.5" cy="34" r="28" fill="none" stroke="#555" strokeWidth="5" strokeDasharray="3 3" />
        <circle cx="33.5" cy="34" r="19" fill="#8e8e8e" stroke="#444" strokeWidth="4" />
        <path d="M33.5 34 L33.5 15 M33.5 34 L17 44 M33.5 34 L50 44" stroke="#444" strokeWidth="5" />
      </svg>
    </Tile>) },
  { el: (
    <Tile c="bg-[#c6dde0]">
      <svg viewBox="0 0 67 68" className={V}>
        <rect x="1" y="3" width="65" height="64" rx="13" fill="#000" />
        <rect x="6" y="6" width="55" height="54" rx="6" fill="#1d3330" />
        <path d="M7 20H60M7 34H60M7 48H60M20 6V60M33 6V60M47 6V60" stroke="#3a5c56" strokeWidth="1" />
        <path d="M7 47 H15 L19 14 L23 53 L28 44 Q34 30 40 44 L50 44 L58 50" fill="none" stroke="#7fd8c0" strokeWidth="1.2" />
      </svg>
    </Tile>) },
  { dot: true, el: (
    <svg viewBox="0 0 67 68" className={V}>
      <defs><linearGradient id="ij" x1="0" y1="0" x2="1" y2="1"><stop offset="0" stopColor="#f9a43c" /><stop offset="0.35" stopColor="#e33d8e" /><stop offset="0.7" stopColor="#6a45e0" /><stop offset="1" stopColor="#2e8cf0" /></linearGradient></defs>
      <rect y="2" width="64" height="64" fill="url(#ij)" />
      <rect x="7" y="9" width="50" height="50" fill="#12050f" />
      <text x="13" y="36" fontSize="25" fontWeight="700" fill="#fff" fontFamily="Liberation Mono">IJ</text>
      <rect x="14" y="48" width="18" height="3.5" fill="#fff" />
    </svg>) },
  { dot: true, el: (
    <Tile c="bg-[#4a4a4a]">
      <svg viewBox="0 0 67 68" className={V}>
        <polygon points="51,10 51,24 15,38 15,24" fill="#f49b2b" />
        <polygon points="15,25 51,37 51,50 15,38" fill="#c77a1c" />
        <polygon points="51,33 51,45 15,57 15,45" fill="#f49b2b" />
      </svg>
    </Tile>) },
  { dot: true, el: <Tile c="bg-gradient-to-b from-[#7f8cf2] to-[#5865f2]"><FaDiscord className="w-[52px] h-[52px] text-white" /></Tile> },
  { dot: true, el: (
    <div className="relative w-[67px] h-[68px]">
      <svg viewBox="0 0 85 84" className="absolute -left-[9px] -top-[8px] w-[85px] h-[84px]">
        {[0, 60, 120, 180, 240, 300].map((r) => (
          <circle key={r} cx="42.5" cy="21" r="21" fill="#f5a01e" opacity="0.75" transform={`rotate(${r} 42.5 42)`} />
        ))}
        <path d="M24 22 L32 18 L37 28 L46 24 L50 27 L58 27 L65 48 L44 66 L35 59 L34 43 Z" fill="#e8642a" stroke="#fff" strokeWidth="4" strokeLinejoin="round" />
        <path d="M40 36 L45 30 M48 36 L51 30" stroke="#fff" strokeWidth="2" />
      </svg>
    </div>) },
  { dot: true, el: (
    <Tile c="bg-[#c6dde0]">
      <svg viewBox="0 0 67 68" className={V}>
        <rect x="1" y="3" width="65" height="64" rx="13" fill="#000" />
        <rect x="5" y="9" width="57" height="51" rx="5" fill="#222" />
        <path d="M12 18 L22 25 L12 32" fill="none" stroke="#fff" strokeWidth="2" />
        <rect x="24" y="33" width="10" height="3" fill="#fff" />
      </svg>
    </Tile>) },
  { dot: true, el: (
    <Tile c="bg-white">
      <svg viewBox="0 0 67 68" className={V}>
        <circle cx="36" cy="34" r="25" fill="#d35230" />
        <path d="M36 9 A25 25 0 0 1 61 34 H36 Z" fill="#f5906f" />
        <path d="M36 34 H61 A25 25 0 0 1 36 59 Z" fill="#c8532f" />
        <rect x="8" y="21" width="27" height="27" rx="2" fill="#b7472a" />
        <text x="21" y="42" fontSize="20" fontWeight="700" fill="#fff" textAnchor="middle" fontFamily="Liberation Sans">P</text>
      </svg>
    </Tile>) },
  { dot: true, el: (
    <svg viewBox="0 0 67 68" className="w-[67px] h-[68px] block overflow-visible">
      <circle cx="33.5" cy="34" r="35" fill="#64d170" />
      <path d="M11 25 Q33 15 57 28" fill="none" stroke="#111" strokeWidth="7" strokeLinecap="round" />
      <path d="M14 38 Q33 30 52 40" fill="none" stroke="#111" strokeWidth="6" strokeLinecap="round" />
      <path d="M17 49 Q33 43 48 51" fill="none" stroke="#111" strokeWidth="5" strokeLinecap="round" />
    </svg>) },
  { dot: true, el: (
    <svg viewBox="0 0 80 68" className="w-[78px] h-[68px] block -ml-[5px]">
      <path d="M0 6 Q0 3 4 3 H24 L30 10 H76 Q80 10 80 14 V26 H0 Z" fill="#3f95d8" />
      <path d="M0 16 H80 V64 Q80 68 76 68 H4 Q0 68 0 64 Z" fill="#84cbf8" />
    </svg>) },
];

const Dock = () => (
  <div className="absolute left-[360px] top-[1684px] w-[2160px] h-[105px] rounded-[22px] border border-[#bbb1a6] bg-gradient-to-r from-[#a29a91] via-[#a39b92] to-[#bcb3a9] pl-[14px] pt-[16px] flex gap-[21px] font-['Liberation_Sans',sans-serif]">
    {icons.map((ic, i) => (
      <div key={i} className="relative w-[67px] h-[68px] shrink-0">
        {ic.el}
        {ic.dot && <span className="absolute left-[30px] top-[78px] w-[7px] h-[7px] rounded-full bg-[#2a2118]" />}
        {i === 3 && (
          <span className="absolute -right-[9px] -top-[8px] w-[54px] h-[26px] rounded-full bg-[#e5554a] text-white text-[17px] flex items-center justify-center">3,606</span>
        )}
        {i === 5 && <span className="absolute -left-[7px] top-[78px] w-[82px] h-[8px] rounded-full bg-[#1a1208]" />}
      </div>
    ))}
    <div className="ml-[11px] mr-[6px] -mt-[2px] w-[1px] h-[78px] bg-[#7d756c]" />
    <div className="w-[67px] h-[68px]">
      <svg viewBox="0 0 67 68" className="block w-[67px] h-[68px]">
        <path d="M6 12 L15 62 Q33 70 52 62 L61 12 Z" fill="#e8e8e6" stroke="#d4d4d2" />
        <path d="M12 18 L18 58 M28 20 L30 62 M42 20 L40 62 M55 18 L49 58" stroke="#f6f6f4" strokeWidth="2" />
        <ellipse cx="33.5" cy="12" rx="27" ry="9" fill="#b0b0ae" />
        <path d="M10 11 L18 1 L24 12 L33 3 L40 13 L48 2 L57 11 L48 17 H20 Z" fill="#f0f0f0" />
        <path d="M24 12 L28 6 L32 14 Z" fill="#44627e" /><path d="M40 13 L44 7 L48 14 Z" fill="#7a4040" />
      </svg>
    </div>
  </div>
);

export default function App() {
  return (
    <div className="relative w-[2880px] h-[1800px] overflow-hidden bg-[linear-gradient(180deg,#211e19_93.6%,#7d7468_95.3%,#b5ac9e_96.8%,#dad0c1_98.5%)]">
      <MenuBar />
      <Ide />
      <div className="absolute left-[55px] top-[50px] w-[2675px] h-[1632px] rounded-[20px] bg-[#c4c4c4]" />
      <App1 />
      <ErrorDialog />
      <Dock />
    </div>
  );
}
